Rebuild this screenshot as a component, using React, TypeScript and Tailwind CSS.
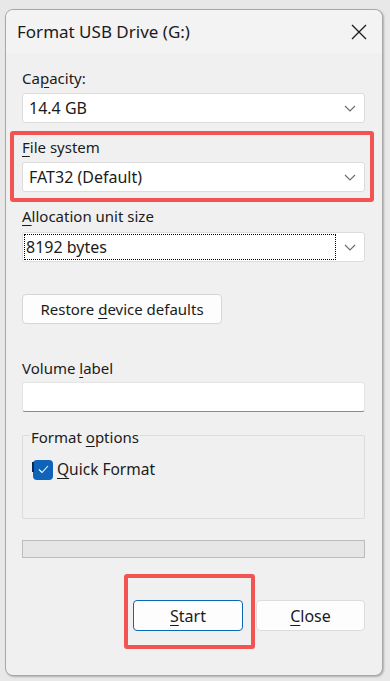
import React from "react";

const font = { fontFamily: '"Noto Sans", "Open Sans", Arial, sans-serif' };

function Chevron() {
  return (
    <svg width="12" height="7" viewBox="0 0 12 7" className="shrink-0">
      <path d="M1 1 L6 6 L11 1" fill="none" stroke="#6b6b6b" strokeWidth="1.1" />
    </svg>
  );
}

function Select({ value, focused }: { value: string; focused?: boolean }) {
  return (
    <div className="flex h-[30px] items-center justify-between rounded-[3px] border border-[#dcdcdc] bg-white pr-[8px] text-[16px]">
      {focused ? (
        <div className="ml-[1px] flex h-[26px] w-[312px] items-center border border-dotted border-black pl-[1px]">
          {value}
        </div>
      ) : (
        <div className="pl-[6px]">{value}</div>
      )}
      <Chevron />
    </div>
  );
}

function U({ children }: { children: React.ReactNode }) {
  return <span className="underline decoration-1 underline-offset-[3px]">{children}</span>;
}

export default function App() {
  return (
    <div className="h-[681px] w-[390px] bg-[#e8e8e8] pl-[5px] pt-[9px] text-[15px] text-[#1b1b1b]" style={font}>
      <div className="flex h-[667px] w-[378px] flex-col rounded-[8px] border border-[#a8a8a8] bg-[#f0f0f0] shadow-[1px_1px_2px_rgba(0,0,0,0.25)]">
        {/* title bar */}
        <div className="flex h-[43px] items-center justify-between rounded-t-[8px] bg-[#f3f3f3] pl-[11px] pr-[15px]">
          <span className="text-[17px] leading-none">Format USB Drive (G:)</span>
          <svg width="16" height="16" viewBox="0 0 16 16">
            <path d="M1 1 L15 15 M15 1 L1 15" stroke="#1b1b1b" strokeWidth="1.3" />
          </svg>
        </div>

        <div className="flex flex-col pl-[16px] pr-[17px]">
          <div className="mt-[14px] leading-[22px]">
            Ca<U>p</U>acity:
          </div>
          <div className="mt-[4px]">
            <Select value="14.4 GB" />
          </div>

          {/* highlighted group */}
          <div className="-ml-[12px] -mr-[9px] mt-[8px] rounded-[3px] border-4 border-[#f25454] pb-[6px] pl-[8px] pr-[5px] pt-[1px]">
            <div className="leading-[22px]">
              <U>F</U>ile system
            </div>
            <div className="mt-[4px]">
              <Select value="FAT32 (Default)" />
            </div>
          </div>

          <div className="mt-[3px] leading-[22px]">
            <U>A</U>llocation unit size
          </div>
          <div className="mt-[5px]">
            <Select value="8192 bytes" focused />
          </div>

          <div className="mt-[32px]">
            <button className="h-[30px] w-[200px] rounded-[4px] border border-[#d6d6d6] bg-[#fdfdfd] text-[15px]">
              Restore <U>d</U>evice defaults
            </button>
          </div>

          <div className="mt-[33px] leading-[22px]">
            Volume <U>l</U>abel
          </div>
          <div className="mt-[3px] h-[30px] rounded-[3px] border border-[#e4e4e4] border-b-[#8a8a8a] bg-white" />

          {/* format options */}
          <div className="relative mt-[23px] h-[84px] rounded-[2px] border border-[#dcdcdc]">
            <div className="absolute -top-[10px] left-[7px] bg-[#f0f0f0] px-[1px] leading-[22px]">
              Format <U>o</U>ptions
            </div>
            <div className="mt-[22px] flex items-center pl-[10px]">
              <div className="relative flex h-[20px] w-[20px] items-center justify-center rounded-[4px] bg-[#0f63b9]">
                <div className="absolute -left-[1px] top-[2px] h-[10px] w-[2px] bg-[#0c2a55]" />
                <svg width="11" height="9" viewBox="0 0 11 9">
                  <path d="M1 4.5 L4 7.5 L10 1" fill="none" stroke="white" strokeWidth="1.1" />
                </svg>
              </div>
              <span className="ml-[4px] text-[15.5px]">
                <U>Q</U>uick Format
              </span>
            </div>
          </div>

          {/* progress */}
          <div className="mt-[21px] h-[18px] border border-[#bcbcbc] bg-[#e6e6e6]" />

          {/* buttons */}
          <div className="mt-[16px] flex items-start justify-end">
            <div className="rounded-[3px] border-4 border-[#f25454] pb-[14px] pl-[5px] pr-[8px] pt-[22px]">
              <button className="h-[31px] w-[110px] rounded-[4px] border border-[#0a66b8] bg-[#fdfdfd] text-[16px]">
                <U>S</U>tart
              </button>
            </div>
            <button className="ml-[1px] mt-[26px] h-[31px] w-[109px] rounded-[4px] border border-[#dcdcdc] bg-[#fdfdfd] text-[16px]">
              <U>C</U>lose
            </button>
          </div>
        </div>
      </div>
    </div>
  );
}
